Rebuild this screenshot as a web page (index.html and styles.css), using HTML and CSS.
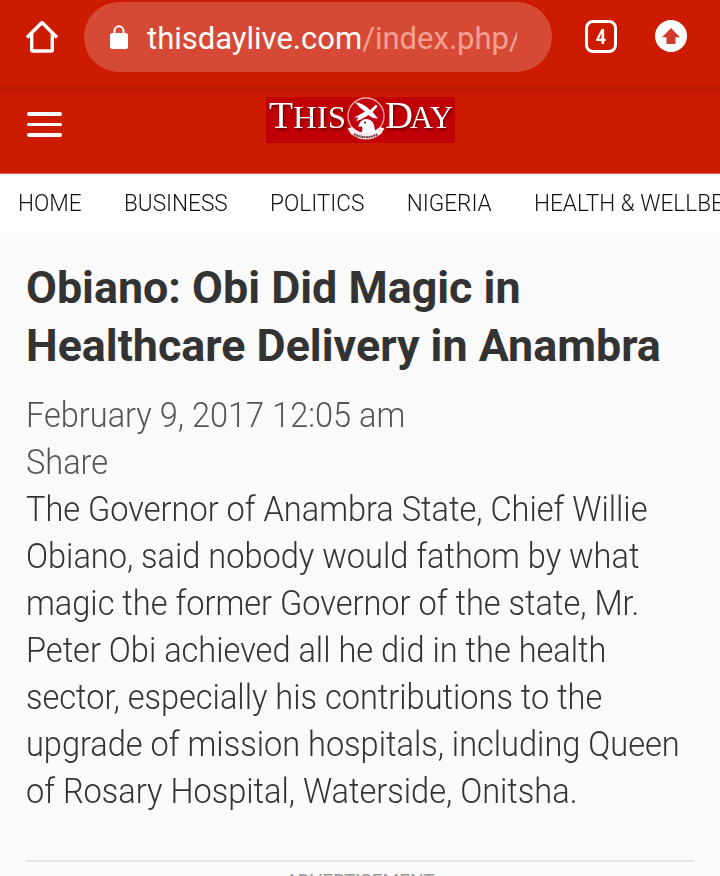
FILE: index.html
```html
<!DOCTYPE html>
<html lang="en">
<head>
<meta charset="utf-8">
<title>Obiano: Obi Did Magic in Healthcare Delivery in Anambra</title>
<link rel="stylesheet" href="styles.css">
</head>
<body>
<div class="browser-bar">
  <svg class="home" viewBox="0 0 32 34" width="32" height="34" fill="none" stroke="#fff" stroke-width="3.4" stroke-linejoin="round"><path d="M1 18.5 16 3.5 31 18.5M5.7 14.5V30.7Q5.7 32 7 32H25Q26.3 32 26.3 30.7V14.5"/></svg>
  <div class="address">
    <svg class="lock" viewBox="0 0 18 24" width="18" height="24"><rect y="8" width="18" height="16" rx="2.5" fill="#fff"/><path d="M4.5 9V5.8a4.5 4.5 0 0 1 9 0V9" fill="none" stroke="#fff" stroke-width="2"/></svg>
    <div class="url">thisdaylive.com<span class="path">/index.php/</span></div>
  </div>
  <div class="tabs"><span>4</span></div>
  <svg class="update" viewBox="0 0 32 32" width="32" height="32"><circle cx="16" cy="16" r="16" fill="#fff"/><path d="M16 8 25 17.2H20.5V24H11.5V17.2H7Z" fill="#cf3a2c"/></svg>
</div>
<header class="site-header">
  <div class="menu"><i></i><i></i><i></i></div>
  <svg class="logo" viewBox="0 0 189 46" width="189" height="46">
    <rect width="189" height="46" fill="#c00006"/>
    <g class="logo-text">
      <text x="3" y="31" font-size="37" textLength="24" lengthAdjust="spacingAndGlyphs">T</text>
      <text x="27" y="31" font-size="31" textLength="53" lengthAdjust="spacingAndGlyphs">HIS</text>
      <text x="119" y="31" font-size="37" textLength="28" lengthAdjust="spacingAndGlyphs">D</text>
      <text x="144" y="31" font-size="31" textLength="43" lengthAdjust="spacingAndGlyphs">AY</text>
    </g>
    <circle cx="100" cy="19" r="18" fill="#c30010" stroke="#efaaa5" stroke-width="1.3"/>
    <path d="M89 5Q99 7 104 13L110 7.5 111.5 9.5 106.5 15 112 21.5Q107 22 102.5 18L95 22.5 90 24 92.5 20.5 88 20.5 93 18 99 14.5Q93 11 89 5Z" fill="#fff"/>
    <path d="M92 29.5 93.5 26.5Q96 21.8 101 22 108 22.5 109 33L110.5 38H93.5Q97.5 34 96 29.5Z" fill="#fff"/>
    <circle cx="99" cy="25.5" r="1.1" fill="#333"/>
    <path d="M81.5 31.5 86 30Q100 42 114 30L118.5 31.5 115 37Q100 48 85 37Z" fill="#f8eeee"/>
    <path d="M88 37Q100 43.5 112 37" fill="none" stroke="#7c4a4a" stroke-width="2.2" stroke-dasharray="2 .5"/>
  </svg>
</header>
<nav class="sections">
  <div class="links"><a>HOME</a><a>BUSINESS</a><a>POLITICS</a><a>NIGERIA</a><a>HEALTH &amp; WELLBEING</a></div>
</nav>
<main class="article">
  <h1>Obiano: Obi Did Magic in<br>Healthcare Delivery in Anambra</h1>
  <div class="copy">
    <div class="meta">February 9, 2017 12:05 am</div>
    <div class="meta">Share</div>
    <p>The Governor of Anambra State, Chief Willie<br>Obiano, said nobody would fathom by what<br>magic the former Governor of the state, Mr.<br>Peter Obi achieved all he did in the health<br>sector, especially his contributions to the<br>upgrade of mission hospitals, including Queen<br>of Rosary Hospital, Waterside, Onitsha.</p>
  </div>
  <div class="ad">ADVERTISEMENT</div>
</main>
</body>
</html>
```
FILE: styles.css
```css
* { box-sizing: border-box; }
body {
  margin: 0;
  width: 720px;
  height: 876px;
  overflow: hidden;
  background: #fafafa;
  font-family: Roboto, "Liberation Sans", sans-serif;
}
.browser-bar {
  display: flex;
  align-items: flex-start;
  height: 86px;
  padding: 2px 0 0 26px;
  background: #cc1b00;
}
.home { margin-top: 17px; }
.address {
  display: flex;
  align-items: center;
  width: 468px;
  height: 70px;
  margin-left: 26px;
  padding-left: 26px;
  border-radius: 35px;
  background: #d64a35;
}
.lock { margin-top: -1px; }
.url {
  width: 370px;
  margin: 3px 0 0 19px;
  overflow: hidden;
  white-space: nowrap;
  color: #fff;
  font-size: 31px;
  line-height: 44px;
}
.path { color: #f3a094; }
.tabs {
  width: 32px;
  height: 33px;
  margin: 18px 0 0 33px;
  border: 3px solid #fff;
  border-radius: 8px;
  color: #fff;
  font-size: 21px;
  font-weight: 700;
  line-height: 28px;
  text-align: center;
}
.tabs span {
  display: block;
  transform: scaleX(.85);
}
.update { margin: 18px 0 0 38px; }
.site-header {
  display: flex;
  align-items: flex-start;
  height: 88px;
  padding-left: 27px;
  background: linear-gradient(#b51c04 0, #c21b03 4px, #cc1b00 11px);
  border-bottom: 1px solid #dc6655;
}
.menu {
  display: flex;
  flex-direction: column;
  gap: 7px;
  width: 35px;
  margin-top: 26px;
}
.menu i {
  height: 3.5px;
  border-radius: 2px;
  background: #fff;
}
.logo { margin: 11px 0 0 204px; }
.logo-text {
  fill: #fff;
  font-family: "Liberation Serif", serif;
  filter: drop-shadow(1px 2px 1px #600);
}
.sections {
  height: 59px;
  padding-left: 18px;
  overflow: hidden;
  background: #fff;
}
.links {
  display: flex;
  gap: 44px;
  color: #111;
  font-size: 23.5px;
  font-weight: 300;
  line-height: 59px;
  white-space: nowrap;
  transform: scaleX(.961);
  transform-origin: 0 0;
}
.article { padding: 26px 26px 0; }
h1 {
  margin: 0;
  color: #333;
  font-size: 44.8px;
  font-weight: 700;
  line-height: 58px;
  white-space: nowrap;
}
.copy {
  margin-top: 17px;
  color: #333;
  font-size: 34.5px;
  font-weight: 300;
  line-height: 47px;
  white-space: nowrap;
  transform: scaleX(.943);
  transform-origin: 0 0;
}
.meta { color: #555; }
p { margin: 0; }
.ad {
  margin-top: 45px;
  padding-top: 8px;
  border-top: 2px solid #e7e7e7;
  color: #999;
  font-size: 19px;
  line-height: 22px;
  text-align: center;
}
```
